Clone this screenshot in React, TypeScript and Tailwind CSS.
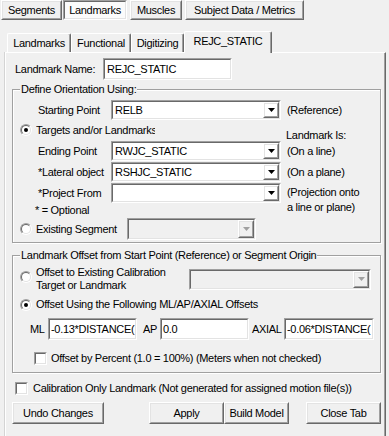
import type { ReactNode } from "react";

const Sunken = ({
  className = "",
  inner = "bg-white",
  children,
}: {
  className?: string;
  inner?: string;
  children?: ReactNode;
}) => (
  <div
    className={
      "shrink-0 border border-t-[#a0a0a0] border-l-[#a0a0a0] border-r-white border-b-white " +
      className
    }
  >
    <div
      className={
        "flex h-full items-center overflow-hidden border border-t-[#696969] border-l-[#696969] border-r-[#e3e3e3] border-b-[#e3e3e3] " +
        inner
      }
    >
      {children}
    </div>
  </div>
);

const Raised = ({
  className = "",
  inner = "",
  children,
}: {
  className?: string;
  inner?: string;
  children?: ReactNode;
}) => (
  <div
    className={
      "shrink-0 border border-t-white border-l-white border-r-[#696969] border-b-[#696969] " +
      className
    }
  >
    <div
      className={
        "flex h-full items-center justify-center border border-t-[#e3e3e3] border-l-[#e3e3e3] border-r-[#a0a0a0] border-b-[#a0a0a0] " +
        inner
      }
    >
      {children}
    </div>
  </div>
);

const Arrow = ({ disabled }: { disabled?: boolean }) => (
  <svg width="7" height="4" viewBox="0 0 7 4">
    <polygon points="0,0 7,0 3.5,4" fill={disabled ? "#a0a0a0" : "#000"} />
  </svg>
);

const Combo = ({
  value = "",
  className = "",
  disabled,
}: {
  value?: string;
  className?: string;
  disabled?: boolean;
}) => (
  <Sunken className={className} inner={disabled ? "bg-[#f0f0f0]" : "bg-white"}>
    <span className="flex-1 overflow-hidden whitespace-nowrap pl-[2px]">{value}</span>
    <Raised className="h-full w-[16px]">
      <Arrow disabled={disabled} />
    </Raised>
  </Sunken>
);

const Radio = ({ checked, className = "" }: { checked?: boolean; className?: string }) => (
  <div
    className={
      "h-[12px] w-[12px] shrink-0 rounded-full border border-t-[#a0a0a0] border-l-[#a0a0a0] border-r-white border-b-white " +
      className
    }
  >
    <div className="flex h-full w-full items-center justify-center rounded-full border border-t-[#696969] border-l-[#696969] border-r-[#e3e3e3] border-b-[#e3e3e3] bg-white">
      {checked && <div className="h-[4px] w-[4px] rounded-full bg-black" />}
    </div>
  </div>
);

const Check = ({ className = "" }: { className?: string }) => (
  <Sunken className={"h-[13px] w-[13px] " + className} />
);

const Group = ({
  title,
  className = "",
  children,
}: {
  title: string;
  className?: string;
  children: ReactNode;
}) => (
  <div
    className={
      "ml-[6px] w-[369px] border border-[#a0a0a0] shadow-[inset_1px_1px_0_#fff,1px_1px_0_#fff] " +
      className
    }
  >
    <div className="-mt-[7px] ml-[7px] w-fit bg-[#f0f0f0] px-[1px]">{title}</div>
    {children}
  </div>
);

// label + dropdown + note on the right
const ComboRow = ({
  label,
  value,
  note,
}: {
  label: string;
  value?: string;
  note?: ReactNode;
}) => (
  <div className="mb-[1px] flex h-[20px] items-center">
    <span className="ml-[25px] w-[73px] whitespace-nowrap">{label}</span>
    <Combo value={value} className="h-[20px] w-[170px]" />
    {note}
  </div>
);

const App = () => {
  return (
    <div className="flex h-[436px] w-[389px] flex-col overflow-hidden bg-[#f0f0f0] font-['Liberation_Sans',Arial,sans-serif] text-[11px] leading-[13px] tracking-[-0.3px] text-black">
      {/* top level tabs, button style */}
      <div className="flex h-[20px] shrink-0 pl-[1px]">
        <Raised className="h-[20px] w-[61px]">Segments</Raised>
        <Sunken className="ml-[1px] h-[20px] w-[64px]" inner="justify-center bg-[#fbfbfb]">
          Landmarks
        </Sunken>
        <Raised className="ml-[3px] h-[20px] w-[52px]">Muscles</Raised>
        <Raised className="ml-[3px] h-[20px] w-[119px]">Subject Data / Metrics</Raised>
      </div>

      {/* landmark tabs */}
      <div className="mt-[11px] flex h-[21px] shrink-0 items-end pl-[7px]">
        {[
          ["Landmarks", "w-[64px]"],
          ["Functional", "w-[60px]"],
          ["Digitizing", "w-[53px]"],
        ].map(([t, w]) => (
          <div
            key={t}
            className={
              "flex h-[19px] items-center justify-center rounded-t-[2px] border-t border-l border-r border-t-white border-l-white border-r-[#696969] shadow-[inset_-1px_0_0_#a0a0a0] " +
              w
            }
          >
            {t}
          </div>
        ))}
        <div className="relative z-10 -mb-[1px] flex h-[22px] w-[88px] items-center justify-center rounded-t-[2px] border-t border-l border-r border-t-white border-l-white border-r-[#696969] bg-[#f0f0f0] pb-[2px] shadow-[inset_-1px_0_0_#a0a0a0]">
          REJC_STATIC
        </div>
      </div>

      {/* tab panel */}
      <div className="ml-[5px] flex w-[381px] flex-1 flex-col border-t border-l border-r border-t-white border-l-white border-r-[#696969] shadow-[inset_-1px_0_0_#a0a0a0,-1px_0_0_#d4d4d4]">
        <div className="mt-[5px] flex h-[22px] items-center">
          <span className="ml-[9px] w-[88px]">Landmark Name:</span>
          <Sunken className="h-[22px] w-[129px]">
            <span className="pl-[2px]">REJC_STATIC</span>
          </Sunken>
        </div>

        <Group title="Define Orientation Using:" className="mt-[9px] pb-[2px]">
          <div className="mt-[4px]" />
          <ComboRow
            label="Starting Point"
            value="RELB"
            note={<span className="ml-[6px]">(Reference)</span>}
          />
          <div className="flex h-[20px] items-start">
            <div className="mt-[3px] flex h-[12px] w-[273px] items-center">
              <Radio checked className="ml-[7px]" />
              <span className="ml-[4px] w-[119px] overflow-hidden whitespace-nowrap">
                Targets and/or Landmarks
              </span>
            </div>
            <span className="mt-[8px]">Landmark Is:</span>
          </div>
          <ComboRow
            label="Ending Point"
            value="RWJC_STATIC"
            note={<span className="ml-[6px]">(On a line)</span>}
          />
          <ComboRow
            label="*Lateral object"
            value="RSHJC_STATIC"
            note={<span className="ml-[6px]">(On a plane)</span>}
          />
          <ComboRow
            label="*Project From"
            note={
              <div className="ml-[6px] mt-[2px] self-start leading-[15px]">
                (Projection onto
                <br />a line or plane)
              </div>
            }
          />
          <div className="ml-[22px]">* = Optional</div>
          <div className="mt-[1px] flex h-[22px] items-center">
            <Radio className="ml-[7px]" />
            <span className="ml-[4px] w-[91px] whitespace-nowrap">Existing Segment</span>
            <Combo disabled className="h-[22px] w-[129px]" />
          </div>
        </Group>

        <Group
          title="Landmark Offset from Start Point (Reference) or Segment Origin"
          className="mt-[12px] pb-[7px]"
        >
          <div className="mt-[4px] flex h-[26px] items-center">
            <Radio className="ml-[7px] -mt-[4px]" />
            <span className="ml-[4px] w-[153px]">
              Offset to Existing Calibration
              <br />
              Target or Landmark
            </span>
            <Combo disabled className="h-[21px] w-[182px]" />
          </div>
          <div className="mt-[6px] flex h-[13px] items-center">
            <Radio checked className="ml-[7px]" />
            <span className="ml-[4px] whitespace-nowrap">
              Offset Using the Following ML/AP/AXIAL Offsets
            </span>
          </div>
          <div className="mt-[7px] flex h-[22px] items-center">
            <span className="ml-[17px] w-[18px]">ML</span>
            <Sunken className="h-[22px] w-[89px]">
              <span className="whitespace-nowrap pl-[1px]">-0.13*DISTANCE(</span>
            </Sunken>
            <span className="ml-[6px] w-[17px]">AP</span>
            <Sunken className="h-[22px] w-[89px]">
              <span className="pl-[1px]">0.0</span>
            </Sunken>
            <span className="ml-[3px] w-[32px]">AXIAL</span>
            <Sunken className="h-[22px] w-[90px]">
              <span className="whitespace-nowrap pl-[1px]">-0.06*DISTANCE(</span>
            </Sunken>
          </div>
          <div className="mt-[12px] flex h-[13px] items-center">
            <Check className="ml-[21px]" />
            <span className="ml-[4px] whitespace-nowrap">
              Offset by Percent (1.0 = 100%) (Meters when not checked)
            </span>
          </div>
        </Group>

        <div className="mt-[9px] flex h-[13px] items-center">
          <Check className="ml-[9px]" />
          <span className="ml-[5px] whitespace-nowrap">
            Calibration Only Landmark (Not generated for assigned motion file(s))
          </span>
        </div>

        <div className="mt-[7px] flex h-[22px] items-center">
          <Raised className="ml-[6px] h-[22px] w-[92px]">Undo Changes</Raised>
          <Raised className="ml-[45px] h-[22px] w-[75px]">Apply</Raised>
          <Raised className="h-[22px] w-[65px]">Build Model</Raised>
          <Raised className="ml-[17px] h-[22px] w-[75px]">Close Tab</Raised>
        </div>
      </div>
    </div>
  );
};

export default App;
